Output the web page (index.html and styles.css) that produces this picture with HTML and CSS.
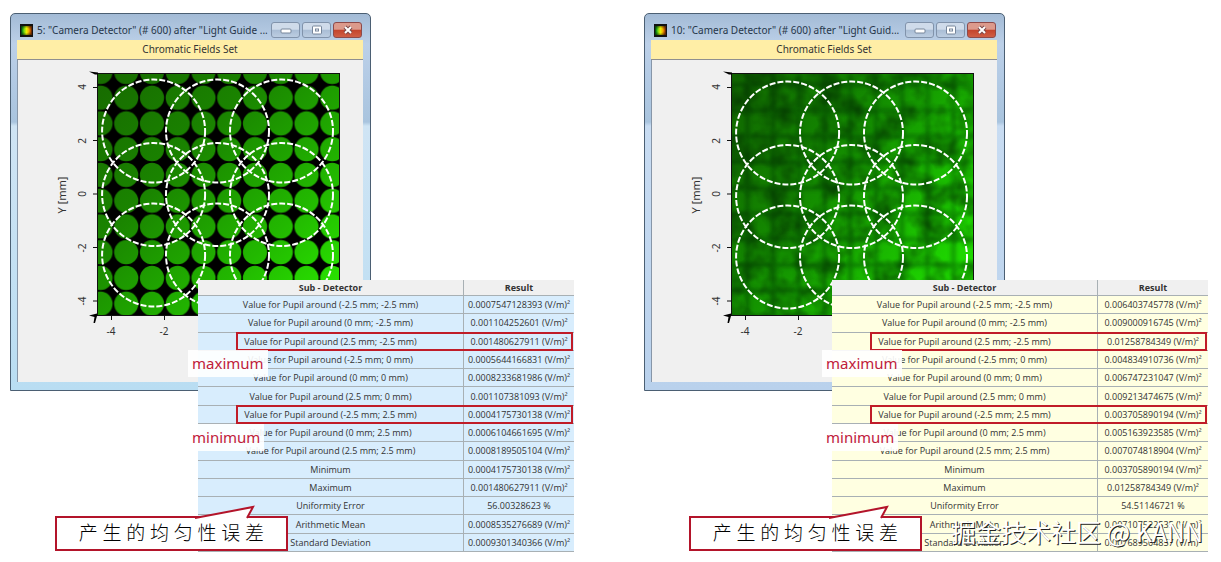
FILE: index.html
```html
<!DOCTYPE html>
<html lang="zh">
<head>
    <meta charset="UTF-8">
    <meta name="viewport" content="width=device-width, initial-scale=1.0">
    <title>Camera Detector</title>
    <link rel="stylesheet" href="styles.css">
</head>
<body>
    <main class="figures">
        <section class="figure">
            <div class="window window-cyan">
                <header class="titlebar">
                    <svg class="app-icon" viewBox="0 0 13 13" aria-hidden="true">
                        <defs>
                            <linearGradient id="spectrum"><stop offset="0" stop-color="#00c020"/><stop offset=".5" stop-color="#e8f000"/><stop offset="1" stop-color="#ff5a00"/></linearGradient>
                            <radialGradient id="vignette" r=".65"><stop offset=".4" stop-opacity="0"/><stop offset="1" stop-opacity=".7"/></radialGradient>
                        </defs>
                        <rect width="13" height="13" fill="#111"/>
                        <rect x="1.5" y="2" width="10" height="9" fill="url(#spectrum)"/>
                        <rect x="1.5" y="2" width="10" height="9" fill="url(#vignette)"/>
                    </svg>
                    <h1>5: "Camera Detector" (# 600) after "Light Guide ...</h1>
                    <div class="controls">
                        <button aria-label="Minimize"><svg viewBox="0 0 14 10"><rect x="2" y="4" width="10" height="4" rx="1"/></svg></button>
                        <button aria-label="Maximize"><svg viewBox="0 0 14 10"><rect x="2.5" y="1" width="9" height="8" rx="1"/><rect x="5.5" y="4" width="3" height="2"/></svg></button>
                        <button class="close" aria-label="Close"><svg viewBox="0 0 14 10"><path class="x-edge" d="M4 2l6 6M10 2l-6 6"/><path class="x-fill" d="M4 2l6 6M10 2l-6 6"/></svg></button>
                    </div>
                </header>
                <div class="caption">Chromatic Fields Set</div>
                <div class="plot">
                    <svg width="345" height="322" viewBox="8 47 345 322">
                        <defs>
                            <linearGradient id="beam" x1="0" y1="0" x2="1" y2="1"><stop offset="0" stop-color="#176a00"/><stop offset=".35" stop-color="#1a8400"/><stop offset=".7" stop-color="#22b800"/><stop offset="1" stop-color="#2bf000"/></linearGradient>
                            <pattern id="lenses" x="129.1" y="71.8" width="25.75" height="25.75" patternUnits="userSpaceOnUse"><circle cx="12.9" cy="12.9" r="12.1" fill="#fff"/></pattern>
                            <mask id="lens-mask"><rect x="87" y="60" width="243" height="243" fill="url(#lenses)"/></mask>
                            <g id="pupils" class="pupils">
                                <circle cx="143.6" cy="118" r="51.5"/><circle cx="207.5" cy="118" r="51.5"/><circle cx="271.5" cy="118" r="51.5"/>
                                <circle cx="143.6" cy="181.5" r="51.5"/><circle cx="207.5" cy="181.5" r="51.5"/><circle cx="271.5" cy="181.5" r="51.5"/>
                                <circle cx="143.6" cy="242" r="51.5"/><circle cx="207.5" cy="242" r="51.5"/><circle cx="271.5" cy="242" r="51.5"/>
                            </g>
                            <g id="axes">
                                <path class="ticks" d="M83 74.500h4M83 127.500h4M83 181h4M83 234.500h4M83 288h4M101.500 303v4M154.500 303v4"/>
                                <path d="M79 58.500l9 1v2h-3zM79 302.500l8-2v2.500l-2 7h-1.500l1-6z"/>
                            </g>
                        </defs>
                        <rect x="87" y="60" width="243" height="243"/>
                        <rect x="87" y="60" width="243" height="243" fill="url(#beam)" mask="url(#lens-mask)"/>
                        <rect class="frame" x="87.500" y="60.500" width="242" height="242"/>
                        <use href="#pupils"/>
                        <use href="#axes"/>
                        <g class="axis-labels">
                            <text transform="translate(76 74) rotate(-90)">4</text>
                            <text transform="translate(76 128) rotate(-90)">2</text>
                            <text transform="translate(76 181) rotate(-90)">0</text>
                            <text transform="translate(76 235) rotate(-90)">-2</text>
                            <text transform="translate(76 288) rotate(-90)">-4</text>
                            <text x="101" y="322">-4</text>
                            <text x="154" y="322">-2</text>
                            <text class="axis-title" transform="translate(56 182) rotate(-90)">Y [mm]</text>
                        </g>
                    </svg>
                </div>
            </div>
            <table class="results results-blue">
                <thead><tr><th>Sub - Detector</th><th>Result</th></tr></thead>
                <tbody>
                    <tr><td>Value for Pupil around (-2.5 mm; -2.5 mm)</td><td>0.0007547128393 (V/m)²</td></tr>
                    <tr><td>Value for Pupil around (0 mm; -2.5 mm)</td><td>0.001104252601 (V/m)²</td></tr>
                    <tr class="marked"><td>Value for Pupil around (2.5 mm; -2.5 mm)</td><td>0.001480627911 (V/m)²</td></tr>
                    <tr><td>Value for Pupil around (-2.5 mm; 0 mm)</td><td>0.0005644166831 (V/m)²</td></tr>
                    <tr><td>Value for Pupil around (0 mm; 0 mm)</td><td>0.0008233681986 (V/m)²</td></tr>
                    <tr><td>Value for Pupil around (2.5 mm; 0 mm)</td><td>0.001107381093 (V/m)²</td></tr>
                    <tr class="marked"><td>Value for Pupil around (-2.5 mm; 2.5 mm)</td><td>0.0004175730138 (V/m)²</td></tr>
                    <tr><td>Value for Pupil around (0 mm; 2.5 mm)</td><td>0.0006104661695 (V/m)²</td></tr>
                    <tr><td>Value for Pupil around (2.5 mm; 2.5 mm)</td><td>0.0008189505104 (V/m)²</td></tr>
                    <tr><td>Minimum</td><td>0.0004175730138 (V/m)²</td></tr>
                    <tr><td>Maximum</td><td>0.001480627911 (V/m)²</td></tr>
                    <tr><td>Uniformity Error</td><td>56.00328623 %</td></tr>
                    <tr><td>Arithmetic Mean</td><td>0.0008535276689 (V/m)²</td></tr>
                    <tr><td>Standard Deviation</td><td>0.0009301340366 (V/m)²</td></tr>
                </tbody>
            </table>
            <span class="tag tag-max">maximum</span>
            <span class="tag tag-min">minimum</span>
            <div class="callout">
                <svg class="pointer" viewBox="0 0 62 14" aria-hidden="true"><path d="M2 13L60 2l-6 11"/></svg>
                产 生 的 均 匀 性 误 差
            </div>
        </section>

        <section class="figure">
            <div class="window">
                <header class="titlebar">
                    <svg class="app-icon" viewBox="0 0 13 13" aria-hidden="true">
                        <rect width="13" height="13" fill="#111"/>
                        <rect x="1.5" y="2" width="10" height="9" fill="url(#spectrum)"/>
                        <rect x="1.5" y="2" width="10" height="9" fill="url(#vignette)"/>
                    </svg>
                    <h1>10: "Camera Detector" (# 600) after "Light Guid...</h1>
                    <div class="controls">
                        <button aria-label="Minimize"><svg viewBox="0 0 14 10"><rect x="2" y="4" width="10" height="4" rx="1"/></svg></button>
                        <button aria-label="Maximize"><svg viewBox="0 0 14 10"><rect x="2.5" y="1" width="9" height="8" rx="1"/><rect x="5.5" y="4" width="3" height="2"/></svg></button>
                        <button class="close" aria-label="Close"><svg viewBox="0 0 14 10"><path class="x-edge" d="M4 2l6 6M10 2l-6 6"/><path class="x-fill" d="M4 2l6 6M10 2l-6 6"/></svg></button>
                    </div>
                </header>
                <div class="caption">Chromatic Fields Set</div>
                <div class="plot">
                    <svg width="345" height="322" viewBox="8 47 345 322">
                        <defs>
                            <linearGradient id="diffuse" x1="0" y1="0" x2="1" y2=".6"><stop offset="0" stop-color="#0e6200"/><stop offset=".5" stop-color="#119000"/><stop offset="1" stop-color="#1bd800"/></linearGradient>
                            <pattern id="seams" x="129.1" y="71.8" width="25.75" height="25.75" patternUnits="userSpaceOnUse"><path d="M0 0h25.750M0 0v25.750M0 25.750h25.750M25.750 0v25.750" stroke="#032800" stroke-width="4"/></pattern>
                            <filter id="grain" x="0" y="0" width="1" height="1" color-interpolation-filters="sRGB"><feTurbulence type="fractalNoise" baseFrequency=".04" numOctaves="3" seed="7"/><feColorMatrix values="0 0 0 0 0  0 0 0 0 .15  0 0 0 0 0  1.300 0 0 0 -.480"/></filter>
                            <filter id="soften" x="0" y="0" width="1" height="1"><feGaussianBlur stdDeviation="2"/></filter>
                        </defs>
                        <rect x="87" y="60" width="243" height="243" fill="url(#diffuse)"/>
                        <rect x="87" y="60" width="243" height="243" fill="url(#beam)" mask="url(#lens-mask)" class="haze"/>
                        <rect x="87" y="60" width="243" height="243" fill="url(#seams)" class="seams" filter="url(#soften)"/>
                        <rect x="87" y="60" width="243" height="243" filter="url(#grain)"/>
                        <rect class="frame" x="87.500" y="60.500" width="242" height="242"/>
                        <use href="#pupils" y="2"/>
                        <use href="#axes"/>
                        <g class="axis-labels">
                            <text transform="translate(76 74) rotate(-90)">4</text>
                            <text transform="translate(76 128) rotate(-90)">2</text>
                            <text transform="translate(76 181) rotate(-90)">0</text>
                            <text transform="translate(76 235) rotate(-90)">-2</text>
                            <text transform="translate(76 288) rotate(-90)">-4</text>
                            <text x="101" y="322">-4</text>
                            <text x="154" y="322">-2</text>
                            <text class="axis-title" transform="translate(56 182) rotate(-90)">Y [mm]</text>
                        </g>
                    </svg>
                </div>
            </div>
            <table class="results">
                <thead><tr><th>Sub - Detector</th><th>Result</th></tr></thead>
                <tbody>
                    <tr><td>Value for Pupil around (-2.5 mm; -2.5 mm)</td><td>0.006403745778 (V/m)²</td></tr>
                    <tr><td>Value for Pupil around (0 mm; -2.5 mm)</td><td>0.009000916745 (V/m)²</td></tr>
                    <tr class="marked"><td>Value for Pupil around (2.5 mm; -2.5 mm)</td><td>0.01258784349 (V/m)²</td></tr>
                    <tr><td>Value for Pupil around (-2.5 mm; 0 mm)</td><td>0.004834910736 (V/m)²</td></tr>
                    <tr><td>Value for Pupil around (0 mm; 0 mm)</td><td>0.006747231047 (V/m)²</td></tr>
                    <tr><td>Value for Pupil around (2.5 mm; 0 mm)</td><td>0.009213474675 (V/m)²</td></tr>
                    <tr class="marked"><td>Value for Pupil around (-2.5 mm; 2.5 mm)</td><td>0.003705890194 (V/m)²</td></tr>
                    <tr><td>Value for Pupil around (0 mm; 2.5 mm)</td><td>0.005163923585 (V/m)²</td></tr>
                    <tr><td>Value for Pupil around (2.5 mm; 2.5 mm)</td><td>0.007074818904 (V/m)²</td></tr>
                    <tr><td>Minimum</td><td>0.003705890194 (V/m)²</td></tr>
                    <tr><td>Maximum</td><td>0.01258784349 (V/m)²</td></tr>
                    <tr><td>Uniformity Error</td><td>54.51146721 %</td></tr>
                    <tr><td>Arithmetic Mean</td><td>0.007107522535 (V/m)²</td></tr>
                    <tr><td>Standard Deviation</td><td>0.007689504857 (V/m)²</td></tr>
                </tbody>
            </table>
            <span class="tag tag-max">maximum</span>
            <span class="tag tag-min">minimum</span>
            <div class="callout">
                <svg class="pointer" viewBox="0 0 62 14" aria-hidden="true"><path d="M2 13L60 2l-6 11"/></svg>
                产 生 的 均 匀 性 误 差
            </div>
            <div class="watermark">掘金技术社区 @ KANN</div>
        </section>
    </main>
</body>
</html>
```
FILE: styles.css
```css
body {
    margin: 0;
    background: #fff;
    color: #333;
    font-family: "Noto Sans", "Open Sans", "Noto Sans CJK SC", sans-serif;
}
.figures {
    display: grid;
    grid-template-columns: 1fr 1fr;
    gap: 70px;
    padding: 13px 13px 10px 10px;
}
/* the window and its table share the middle cell, the table on top */
.figure {
    position: relative;
    display: grid;
    grid-template-columns: 188fr 173fr 203fr;
    grid-template-rows: 267px 111px 161px;
}
.window {
    grid-area: 1 / 1 / 3 / 3;
    display: flex;
    flex-direction: column;
    box-sizing: border-box;
    min-width: 0;
    padding: 0 7px 8px 6px;
    border: 1px solid #4b5f73;
    border-radius: 5px 5px 0 0;
    background: linear-gradient(#a3bbd6, #bcd0e8 30px, #b4cbe5 60px, #a9c4de 108px, #c8dcf2 112px, #b9d1ec);
}
.window-cyan {
    background: linear-gradient(#a3bbd6, #bcd0e8 30px, #b4cbe5 60px, #a9c4de 108px, #cfe4f4 112px, #b9ddf2);
}
.titlebar {
    display: flex;
    align-items: center;
    gap: 4px;
    height: 18px;
    padding: 7px 1px 1px 3px;
}
.app-icon {
    flex: none;
    width: 13px;
    height: 13px;
}
.titlebar h1 {
    flex: 1;
    min-width: 0;
    margin: 0;
    font-size: 10px;
    font-weight: normal;
    line-height: 18px;
    white-space: nowrap;
    color: #26364a;
}
.controls {
    display: flex;
    gap: 2px;
}
.controls button {
    display: flex;
    align-items: center;
    justify-content: center;
    width: 29px;
    height: 16px;
    padding: 0;
    border: 1px solid #8193ab;
    border-radius: 3px;
    background: linear-gradient(#cfdbea 45%, #a9bdd5 50%, #bccde1);
}
.controls svg {
    width: 14px;
    height: 10px;
}
.controls rect {
    fill: #fff;
    stroke: #76869b;
}
.controls .close {
    border-color: #8d4a4a;
    background: linear-gradient(#dc9a8c 45%, #c4442c 50%, #cf5f45);
}
.x-edge,
.x-fill {
    stroke: #7d4a4a;
    stroke-width: 4;
}
.x-fill {
    stroke: #fff;
    stroke-width: 2;
}
.caption {
    height: 19px;
    line-height: 18px;
    font-size: 10px;
    text-align: center;
    background: #ffeea6;
    border-bottom: 1px solid #8f8f8f;
}
.plot {
    flex: 1;
    overflow: hidden;
    box-sizing: border-box;
    background: #f0f0f0;
    border-left: 1px solid #8796a8;
}
.plot svg {
    display: block;
}
.frame,
.ticks {
    fill: none;
    stroke: #111;
}
.pupils {
    fill: none;
    stroke: #fff;
    stroke-width: 2;
    stroke-dasharray: 6 2;
}
.haze {
    opacity: .3;
}
.seams {
    opacity: .4;
}
.axis-labels {
    font-size: 10px;
    text-anchor: middle;
    fill: #333;
}
.axis-title {
    font-size: 11px;
}
.results {
    grid-area: 2 / 2 / 4 / 4;
    z-index: 1;
    width: 100%;
    height: 100%;
    border-collapse: separate;
    border-spacing: 0;
    table-layout: fixed;
    font-family: "Open Sans", "Noto Sans", sans-serif;
    font-size: 9px;
    line-height: 17px;
    text-align: center;
    color: #333;
    background: #ffffe1;
}
.results-blue {
    background: #d8edfd;
}
.results th,
.results td {
    position: relative;
    padding: 0;
    border-bottom: 1px solid #a8b0b4;
    white-space: nowrap;
}
.results th {
    height: 15px;
    line-height: 14px;
    background: #f0f0f0;
}
.results th:last-child {
    width: 110px;
}
.results th:last-child,
.results td:last-child {
    border-left: 1px solid #a8b0b4;
}
.marked td::before {
    content: "";
    position: absolute;
    top: -1px;
    bottom: -1px;
    left: 38px;
    right: 0;
    border: solid #c01c28;
    border-width: 2px 0 2px 2px;
}
.marked td:last-child::before {
    left: -1px;
    right: 1px;
    border-width: 2px 2px 2px 0;
}
.tag {
    position: absolute;
    z-index: 2;
    left: 178px;
    padding: 0 4px;
    background: rgba(255, 255, 255, .9);
    color: #c0203a;
    font-size: 15px;
    line-height: 27px;
}
.tag-max {
    top: 337px;
}
.tag-min {
    top: 411px;
}
.callout {
    position: absolute;
    z-index: 2;
    left: 45px;
    bottom: 1px;
    box-sizing: border-box;
    width: 233px;
    border: 2px solid #b3142a;
    background: #fff;
    color: #000;
    font-family: "Liberation Serif", "Noto Sans CJK SC", serif;
    font-size: 19px;
    font-weight: 300;
    line-height: 31px;
    text-align: center;
}
.pointer {
    position: absolute;
    top: -13px;
    left: 136px;
    width: 62px;
    height: 14px;
    fill: #fff;
    stroke: #b3142a;
    stroke-width: 2;
}
.watermark {
    position: absolute;
    z-index: 3;
    right: 5px;
    bottom: 4px;
    color: #fff;
    font-family: "Noto Sans CJK SC", sans-serif;
    font-size: 25px;
    line-height: 34px;
    text-shadow: 1px 1px 0 #222;
    white-space: nowrap;
}
```
